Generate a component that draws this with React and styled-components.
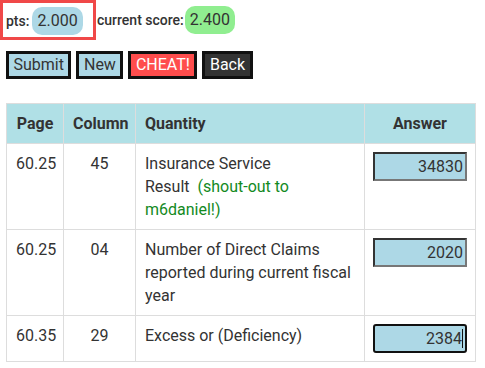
import React from "react"
import styled, { createGlobalStyle } from "styled-components"

const rows = [
    { page: "60.25", col: "45", text: "Insurance Service", last: "Result", shout: "(shout-out to m6daniel!)", answer: "34830" },
    { page: "60.25", col: "04", text: "Number of Direct Claims reported during current fiscal year", answer: "2020" },
    { page: "60.35", col: "29", text: "Excess or (Deficiency)", answer: "2384", focused: true },
]

const App = () => {
    return (
        <Page>
            <Global />
            <ScoreBar>
                <Highlight>
                    <Label>pts:</Label>
                    <Pill bg="#add8e6">2.000</Pill>
                </Highlight>
                <Label>current score:</Label>
                <Pill bg="#90ee90">2.400</Pill>
            </ScoreBar>

            <Buttons>
                <Button>Submit</Button>
                <Button>New</Button>
                <Button bg="#ff4d4d" fg="white">CHEAT!</Button>
                <Button bg="#333" fg="white">Back</Button>
            </Buttons>

            <Table>
                <colgroup>
                    <col width="57" />
                    <col width="72" />
                    <col width="229" />
                    <col width="111" />
                </colgroup>
                <thead>
                    <tr>
                        <Th>Page</Th>
                        <Th>Column</Th>
                        <Th left>Quantity</Th>
                        <Th>Answer</Th>
                    </tr>
                </thead>
                <tbody>
                    {rows.map((r, i) => (
                        <tr key={i}>
                            <Td>{r.page}</Td>
                            <Td>{r.col}</Td>
                            <Td left>
                                {r.text}
                                {r.shout && <> {r.last}<Shout>{"\u00a0\u00a0" + r.shout}</Shout></>}
                            </Td>
                            <AnswerCell>
                                <Answer focused={r.focused}>
                                    {r.answer}
                                    {r.focused && <Caret />}
                                </Answer>
                            </AnswerCell>
                        </tr>
                    ))}
                </tbody>
            </Table>
        </Page>
    )
}

export default App


const Global = createGlobalStyle`
body {
    margin: 0;
    background: white;
    font-family: Roboto, "Liberation Sans", sans-serif;
    color: #333;
}
`;
const Page = styled.div`
width: 485px;
height: 368px;
`;
const ScoreBar = styled.div`
display: flex;
align-items: center;
height: 40px;
`;
const Highlight = styled.div`
display: flex;
align-items: center;
box-sizing: border-box;
width: 96px;
height: 40px;
border: 3px solid #f04848;
padding: 1px 0 0 3px;
gap: 2px;
margin-right: 1px;
`;
const Label = styled.span`
font-size: 14px;
font-weight: 500;
color: #333;
margin-right: 1px;
`;
const Pill = styled.span`
display: inline-block;
background: ${p => p.bg};
border-radius: 10px;
padding: 0 5px;
height: 28px;
line-height: 28px;
font-size: 16px;
color: #333;
`;
const Buttons = styled.div`
display: flex;
gap: 5px;
margin: 11px 0 0 6px;
`;
const Button = styled.div`
box-sizing: border-box;
height: 28px;
border: 3px solid #111;
background: ${p => p.bg || "#add8e6"};
color: ${p => p.fg || "#333"};
font-size: 16px;
line-height: 22px;
padding: 0 4.5px;
`;
const Table = styled.table`
margin: 24px 0 0 6px;
width: 469px;
table-layout: fixed;
border-collapse: collapse;
font-size: 16px;
`;
const Th = styled.th`
background: #b0e0e6;
border: 1px solid #ddd;
padding: 8px 9px;
line-height: 23px;
font-weight: bold;
font-size: 16px;
text-align: ${p => (p.left ? "left" : "center")};
white-space: nowrap;
`;
const Td = styled.td`
border: 1px solid #ddd;
padding: 8px 9px;
line-height: 23px;
vertical-align: top;
text-align: ${p => (p.left ? "left" : "center")};
`;
const AnswerCell = styled.td`
border: 1px solid #ddd;
padding: 8px 0 8px 8px;
vertical-align: top;
`;
const Shout = styled.span`
color: #138a1e;
`;
const Answer = styled.div`
box-sizing: border-box;
width: 94px;
height: 29px;
background: #add8e6;
border: 2px solid;
border-color: ${p => (p.focused ? "#111" : "#333 #777 #777 #333")};
border-radius: ${p => (p.focused ? "3px" : "0")};
padding: 0 2px;
font-size: 16px;
display: flex;
justify-content: flex-end;
align-items: center;
`;
const Caret = styled.span`
width: 1px;
height: 19px;
background: #111;
`;
